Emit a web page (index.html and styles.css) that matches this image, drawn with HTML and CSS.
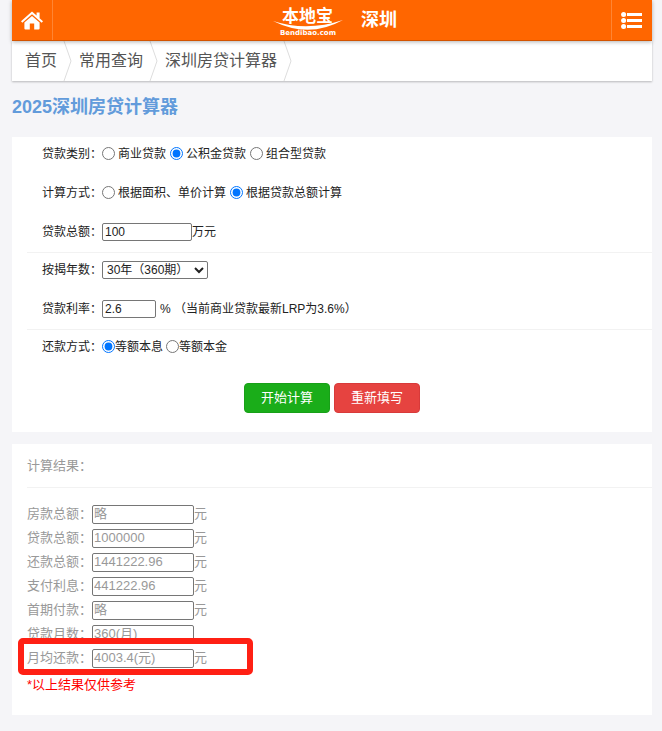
FILE: index.html
```html
<!DOCTYPE html>
<html lang="zh-CN">
<head>
<meta charset="utf-8">
<meta name="viewport" content="width=device-width, initial-scale=1">
<title>2025深圳房贷计算器</title>
<link rel="stylesheet" href="styles.css">
</head>
<body>
<header class="topbar">
  <a class="topbar-btn home" href="#" aria-label="首页">
    <svg width="22" height="19" viewBox="0 0 22 19" fill="#fff" aria-hidden="true">
      <path d="M11 0.5 L15.6 4.6 V1.5 H18.6 V7.3 L22 10.3 L20.7 11.8 L11 3.3 L1.3 11.8 L0 10.3 Z"/>
      <path d="M11 5 L18.6 11.6 V17.4 Q18.6 18.5 17.5 18.5 H13.2 V12.5 H8.8 V18.5 H4.5 Q3.4 18.5 3.4 17.4 V11.6 Z"/>
    </svg>
  </a>
  <div class="brand">
    <a class="logo" href="#" aria-label="本地宝">
      <svg width="70" height="36" viewBox="0 0 70 36" fill="#fff">
        <text class="logo-name" x="9" y="20">本地宝</text>
        <path class="logo-arc" d="M0 19 Q34 30 70 18 Q36 37 0 19 Z"/>
        <text class="logo-domain" x="7" y="33">Bendibao.com</text>
      </svg>
    </a>
    <span class="city">深圳</span>
  </div>
  <a class="topbar-btn menu" href="#" aria-label="菜单">
    <svg width="22" height="17" viewBox="0 0 22 17" fill="#fff" aria-hidden="true">
      <circle cx="2.6" cy="2.6" r="2.5"/><circle cx="2.6" cy="8.5" r="2.5"/><circle cx="2.6" cy="14.4" r="2.5"/>
      <rect x="6" y="1" width="15" height="3"/><rect x="6" y="7" width="15" height="3"/><rect x="6" y="13" width="15" height="3"/>
    </svg>
  </a>
</header>

<nav class="crumbs">
  <a href="#">首页</a>
  <svg width="9" height="40" viewBox="0 0 9 40" aria-hidden="true"><path d="M1 0 L8 20 L1 40"/></svg>
  <a href="#">常用查询</a>
  <svg width="9" height="40" viewBox="0 0 9 40" aria-hidden="true"><path d="M1 0 L8 20 L1 40"/></svg>
  <a href="#">深圳房贷计算器</a>
  <svg width="9" height="40" viewBox="0 0 9 40" aria-hidden="true"><path d="M1 0 L8 20 L1 40"/></svg>
</nav>

<h1>2025深圳房贷计算器</h1>

<form class="card">
  <div class="group">
    <div class="row" role="radiogroup" aria-labelledby="l-type">
      <span class="label" id="l-type">贷款类别：</span>
      <label class="option"><input type="radio" name="type">商业贷款</label>
      <label class="option"><input type="radio" name="type" checked>公积金贷款</label>
      <label class="option"><input type="radio" name="type">组合型贷款</label>
    </div>
    <div class="row" role="radiogroup" aria-labelledby="l-mode">
      <span class="label" id="l-mode">计算方式：</span>
      <label class="option"><input type="radio" name="mode">根据面积、单价计算</label>
      <label class="option"><input type="radio" name="mode" checked>根据贷款总额计算</label>
    </div>
    <div class="row">
      <label class="label" for="total">贷款总额：</label>
      <input class="amount" id="total" type="text" value="100"><span>万元</span>
    </div>
  </div>
  <div class="group">
    <div class="row">
      <label class="label" for="years">按揭年数：</label>
      <select id="years"><option>30年（360期）</option></select>
    </div>
    <div class="row">
      <label class="label" for="rate">贷款利率：</label>
      <input class="rate" id="rate" type="text" value="2.6"><span class="hint">% （当前商业贷款最新LRP为3.6%）</span>
    </div>
  </div>
  <div class="group">
    <div class="row" role="radiogroup" aria-labelledby="l-repay">
      <span class="label" id="l-repay">还款方式：</span>
      <label class="option tight"><input type="radio" name="repay" checked>等额本息</label>
      <label class="option tight"><input type="radio" name="repay">等额本金</label>
    </div>
  </div>
  <div class="actions">
    <button class="btn go" type="button">开始计算</button>
    <button class="btn reset" type="reset">重新填写</button>
  </div>
</form>

<section class="card results">
  <h2>计算结果：</h2>
  <div class="result-list">
    <div class="result"><label for="r1">房款总额：</label><input id="r1" type="text" value="略"><span>元</span></div>
    <div class="result"><label for="r2">贷款总额：</label><input id="r2" type="text" value="1000000"><span>元</span></div>
    <div class="result"><label for="r3">还款总额：</label><input id="r3" type="text" value="1441222.96"><span>元</span></div>
    <div class="result"><label for="r4">支付利息：</label><input id="r4" type="text" value="441222.96"><span>元</span></div>
    <div class="result"><label for="r5">首期付款：</label><input id="r5" type="text" value="略"><span>元</span></div>
    <div class="result"><label for="r6">贷款月数：</label><input id="r6" type="text" value="360(月)"></div>
    <div class="result marked"><label for="r7">月均还款：</label><input id="r7" type="text" value="4003.4(元)"><span>元</span></div>
  </div>
  <p class="note">*以上结果仅供参考</p>
</section>
</body>
</html>
```

FILE: styles.css
```css
*,
*::after {
  box-sizing: border-box;
}

body {
  margin: 0;
  padding: 0 10px 16px 12px;
  background: #f5f5f8;
  color: #222;
  font: 12px/22px "Liberation Sans", "Noto Sans CJK SC", sans-serif;
  text-spacing-trim: space-all;
}

a {
  color: inherit;
  text-decoration: none;
}

input,
select,
button {
  margin: 0;
  font: inherit;
  color: inherit;
}

.topbar {
  position: relative;
  display: flex;
  justify-content: space-between;
  height: 41px;
  background: #f60;
  border-bottom: 1px solid #d35400;
  box-shadow: 0 1px 4px rgba(0, 0, 0, 0.3);
}

.topbar-btn {
  display: flex;
  align-items: center;
  justify-content: center;
  width: 41px;
}

.home {
  border-right: 1px solid #ff8533;
}

.menu {
  border-left: 1px solid #ff8533;
}

.brand {
  display: flex;
  align-items: center;
  gap: 18px;
  padding-left: 6px;
  color: #fff;
}

.logo {
  display: flex;
}

.logo svg {
  overflow: visible;
}

.logo-name {
  font: bold 17px "Noto Sans CJK SC", sans-serif;
}

.logo-domain {
  font: bold 7px "DejaVu Sans", sans-serif;
}

.city {
  font-size: 18px;
  font-weight: bold;
}

.crumbs {
  display: flex;
  align-items: center;
  gap: 8px;
  height: 40px;
  padding-left: 13px;
  background: #fff;
  box-shadow: 0 1px 2px rgba(0, 0, 0, 0.25);
  color: #555;
  font-size: 16px;
}

.crumbs svg {
  margin-right: -1px;
  margin-left: -2px;
  fill: none;
  stroke: #ddd;
}

h1 {
  margin: 12px 0 16px;
  color: #629bdb;
  font-size: 18px;
  line-height: 28px;
}

.card {
  margin-bottom: 12px;
  padding-left: 15px;
  background: #fff;
}

.group {
  display: grid;
  gap: 17px;
  padding: 6px 0 9px 15px;
}

.group + .group {
  border-top: 1px solid #f2f2f2;
}

.row {
  display: flex;
  align-items: center;
  height: 22px;
}

.label {
  width: 60px;
}

.option {
  display: flex;
  align-items: center;
  gap: 3px;
  margin-right: 4px;
}

.option input {
  width: 13px;
  height: 13px;
  margin-bottom: 2px;
}

.tight {
  gap: 0;
  margin-right: 3px;
}

.row input[type="text"],
.row select {
  height: 18px;
  padding: 0 2px;
  background: #fff;
  border: 1px solid #767676;
  border-radius: 2px;
}

.row .amount {
  width: 90px;
}

.row .rate {
  width: 54px;
}

.row select {
  width: 106px;
  padding: 0;
}

.hint {
  margin-left: 4px;
}

.actions {
  display: flex;
  justify-content: center;
  gap: 4px;
  padding: 16px 15px 19px 0;
}

.btn {
  width: 86px;
  height: 30px;
  padding: 0;
  border: 1px solid #18a018;
  border-radius: 4px;
  background: #1aad19;
  color: #fff;
  font-size: 13px;
}

.reset {
  border-color: #d83a3a;
  background: #e64340;
}

.results {
  margin-bottom: 0;
  padding-bottom: 19px;
  color: #999;
  font-size: 13px;
}

h2 {
  margin: 0;
  padding: 11px 0 10px;
  border-bottom: 1px solid #f2f2f2;
  font-size: 13px;
  font-weight: normal;
}

.result-list {
  padding-top: 14px;
}

.result {
  position: relative;
  display: flex;
  align-items: center;
  height: 24px;
}

.result label {
  width: 65px;
}

.result input {
  width: 102px;
  height: 19px;
  padding: 0 1px;
  background: #fff;
  border: 1px solid #767676;
  border-radius: 2px;
}

.marked::after {
  position: absolute;
  top: -8px;
  left: -9px;
  width: 235px;
  height: 37px;
  border: 6px solid #ff2014;
  border-radius: 5px;
  content: "";
  pointer-events: none;
}

.note {
  margin: 0;
  padding-top: 4px;
  color: #f00;
}
```
